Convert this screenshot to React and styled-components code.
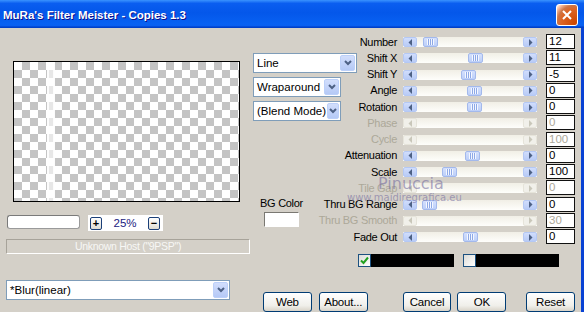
import React from "react";
import styled, { createGlobalStyle } from "styled-components";

const GlobalStyle = createGlobalStyle`
  * { box-sizing: border-box; }
  html, body {
    margin: 0;
    padding: 0;
    width: 584px;
    height: 312px;
    overflow: hidden;
    background: #d4d0c8;
  }
  body {
    font-family: "Liberation Sans", Arial, sans-serif;
    font-size: 11px;
    color: #000;
  }
`;

const Window = styled.div`
  width: 584px;
  height: 312px;
  display: flex;
  flex-direction: column;
  background: #d4d0c8;
  overflow: hidden;
`;

const TitleBar = styled.div`
  flex: none;
  height: 28px;
  display: flex;
  align-items: center;
  justify-content: space-between;
  padding: 2px 6px 0 3px;
  background: linear-gradient(
    180deg,
    #3a93ff 0%,
    #0a5ef0 12%,
    #0457ea 45%,
    #0861f2 85%,
    #0a5ff0 92%,
    #0044d0 96%,
    #003cc4 100%
  );
`;

const Title = styled.div`
  color: #fff;
  font-weight: bold;
  font-size: 11.5px;
  text-shadow: 1px 1px #0f1089;
`;

const CloseButton = styled.div`
  width: 22px;
  height: 22px;
  border: 1px solid #fff;
  border-radius: 3px;
  display: flex;
  align-items: center;
  justify-content: center;
  background: radial-gradient(
    circle at 90% 90%,
    #cc4600 0%,
    #dc6527 55%,
    #cd7546 70%,
    #ffccb2 90%,
    #fff 100%
  );
`;

const Body = styled.div`
  flex: 1;
  display: flex;
  gap: 3px;
  padding: 0 6px;
  border-right: 3px solid #0842d4;
`;

const LeftColumn = styled.div`
  width: 244px;
  flex: none;
  display: flex;
  flex-direction: column;
  padding-top: 33px;
`;

const Preview = styled.div`
  margin-left: 7px;
  width: 227px;
  height: 141px;
  border: 1px solid #000;
  background-color: #fff;
  background-image: linear-gradient(
      90deg,
      transparent 33px,
      rgba(255, 255, 255, 0.95) 33px 35px,
      rgba(255, 255, 255, 0.6) 35px 39px,
      rgba(255, 255, 255, 0.95) 39px 41px,
      transparent 41px
    ),
    conic-gradient(#c4c4c4 25%, #fff 0 50%, #c4c4c4 0 75%, #fff 0);
  background-size: auto, 16px 16px;
`;

const ZoomRow = styled.div`
  margin-top: 13px;
  display: flex;
  align-items: flex-start;
`;

const NameField = styled.div`
  margin-left: 1px;
  width: 73px;
  height: 14px;
  background: #fff;
  border: 1px solid #7a7a7a;
  border-right-color: #9a9a9a;
  border-bottom-color: #9a9a9a;
  border-radius: 3px;
`;

const ZoomControls = styled.div`
  margin-left: 8px;
  width: 75px;
  height: 16px;
  background: #fff;
  display: flex;
  align-items: center;
  justify-content: space-between;
  padding: 0 3px 0 2px;
`;

const TinyButton = styled.div`
  width: 12px;
  height: 13px;
  border: 1px solid #1b3f78;
  border-radius: 2px;
  background: linear-gradient(#ffffff, #dedcd3);
  display: flex;
  align-items: center;
  justify-content: center;
  font-weight: bold;
  font-size: 11px;
  line-height: 1;
`;

const ZoomValue = styled.div`
  color: #1a1a80;
  font-size: 11.5px;
`;

const StatusBar = styled.div`
  margin-top: 8px;
  height: 15px;
  border: 1px solid #fff;
  border-top-color: #a7a39a;
  border-left-color: #a7a39a;
  color: #f7f7f5;
  font-size: 10.5px;
  letter-spacing: -0.3px;
  line-height: 13px;
  text-align: center;
`;

const SelectBox = styled.div`
  width: ${(p) => p.$w}px;
  height: 20px;
  flex: none;
  display: flex;
  background: #fff;
  border: 1px solid #7f9db9;
  margin-top: ${(p) => p.$mt || 0}px;
`;

const SelectText = styled.div`
  flex: 1;
  padding-left: 3px;
  font-size: 11.5px;
  line-height: 18px;
  white-space: nowrap;
`;

const SelectArrow = styled.div`
  width: 15px;
  margin: 1px;
  border: 1px solid #bcd0f9;
  border-radius: 2px;
  background: linear-gradient(#d2defc, #b5c9f6);
  display: flex;
  align-items: center;
  justify-content: center;
`;

const RightArea = styled.div`
  position: relative;
  width: 322px;
  flex: none;
  display: flex;
  flex-direction: column;
`;

const ParamGrid = styled.div`
  margin-top: 6px;
  display: grid;
  grid-template-columns: 1fr 140px 38px;
  grid-template-rows: repeat(13, 16.25px);
`;

const ModeStack = styled.div`
  grid-column: 1;
  grid-row: 2 / span 5;
  justify-self: start;
  align-self: start;
  margin-top: 3px;
  display: flex;
  flex-direction: column;
  gap: 4px;
`;

const BgColor = styled.div`
  grid-column: 1;
  grid-row: 11 / span 3;
  justify-self: start;
  align-self: start;
  margin-left: 7px;
  width: 43px;
  display: flex;
  flex-direction: column;
  align-items: center;
  gap: 2px;
`;

const BgLabel = styled.div`
  line-height: 13px;
  letter-spacing: -0.3px;
  white-space: nowrap;
`;

const Swatch = styled.div`
  width: 35px;
  height: 15px;
  background: #fff;
  border: 1px solid #fff;
  border-top-color: #7a7872;
  border-left-color: #7a7872;
`;

const Label = styled.div`
  grid-column: 1;
  grid-row: ${(p) => p.$row};
  justify-self: end;
  align-self: center;
  line-height: 13px;
  letter-spacing: -0.3px;
  white-space: nowrap;
  color: ${(p) => (p.$disabled ? "#aca899" : "#000")};
`;

const ScrollTrack = styled.div`
  grid-column: 2;
  grid-row: ${(p) => p.$row};
  justify-self: end;
  align-self: center;
  width: 134px;
  height: 10px;
  display: flex;
  background: linear-gradient(#f1efe6, #fefefb);
`;

const ScrollArrow = styled.div`
  width: 14px;
  flex: none;
  border: 1px solid ${(p) => (p.$disabled ? "#e6e4da" : "#b4c8f4")};
  border-radius: 2px;
  background: ${(p) =>
    p.$disabled ? "#f1f0ea" : "linear-gradient(#d0ddfc, #b8cbf6)"};
  display: flex;
  align-items: center;
  justify-content: center;
`;

const Channel = styled.div`
  flex: 1;
  display: flex;
`;

const Thumb = styled.div`
  width: 15px;
  margin-left: ${(p) => p.$pos}px;
  border: 1px solid #a3b9ec;
  border-radius: 2px;
  background: linear-gradient(#d4e0fd, #bccff9);
  display: flex;
  align-items: center;
  justify-content: center;

  &::before {
    content: "";
    width: 7px;
    height: 6px;
    background: repeating-linear-gradient(
      90deg,
      #f4f7ff 0 1px,
      #8ea9e6 1px 2px
    );
  }
`;

const ValueBox = styled.div`
  grid-column: 3;
  grid-row: ${(p) => p.$row};
  justify-self: end;
  align-self: start;
  width: 29px;
  height: 15px;
  background: #fff;
  border: 1px solid #111;
  padding-left: 2px;
  font-size: 11.5px;
  line-height: 13px;
  color: ${(p) => (p.$disabled ? "#aca899" : "#000")};
`;

const ColorRow = styled.div`
  margin-top: 9px;
  padding-left: 105px;
  display: flex;
  gap: 9px;
`;

const ColorPick = styled.div`
  display: flex;
`;

const CheckBox = styled.div`
  width: 13px;
  height: 13px;
  border: 1px solid #1c5180;
  background: linear-gradient(135deg, #dcdcd7 0%, #ffffff 100%);
  display: flex;
  align-items: center;
  justify-content: center;
`;

const ColorBar = styled.div`
  width: 83px;
  height: 13px;
  background: #000;
`;

const ButtonRow = styled.div`
  margin-top: 25px;
  padding-left: 10px;
  display: flex;
`;

const PushButton = styled.div`
  width: 49px;
  height: 20px;
  margin-left: ${(p) => p.$ml || 0}px;
  border: 1px solid #003c74;
  border-radius: 3px;
  background: linear-gradient(#ffffff, #f0efea 70%, #d8d3c8);
  display: flex;
  align-items: center;
  justify-content: center;
  font-size: 11.5px;
  letter-spacing: -0.2px;
`;

const Watermark = styled.div`
  position: absolute;
  left: ${(p) => p.$x}px;
  top: ${(p) => p.$y}px;
  font-family: "DejaVu Sans", sans-serif;
  font-size: ${(p) => p.$size}px;
  color: rgba(118, 110, 160, 0.6);
  white-space: nowrap;
  pointer-events: none;
  line-height: 1;
`;

const Chevron = () => (
  <svg width="8" height="6" viewBox="0 0 8 6">
    <polyline
      points="1,1 4,4 7,1"
      fill="none"
      stroke="#4d6185"
      strokeWidth="2"
    />
  </svg>
);

const Triangle = ({ dir, disabled }) => (
  <svg width="5" height="7" viewBox="0 0 5 7">
    <polygon
      points={dir === "left" ? "4,0 0.5,3.5 4,7" : "1,0 4.5,3.5 1,7"}
      fill={disabled ? "#c9c7ba" : "#4d6185"}
    />
  </svg>
);

const Select = ({ w, mt, children }) => (
  <SelectBox $w={w} $mt={mt}>
    <SelectText>{children}</SelectText>
    <SelectArrow>
      <Chevron />
    </SelectArrow>
  </SelectBox>
);

const ScrollBar = ({ row, pos, disabled }) => (
  <ScrollTrack $row={row}>
    <ScrollArrow $disabled={disabled}>
      <Triangle dir="left" disabled={disabled} />
    </ScrollArrow>
    <Channel>{!disabled && <Thumb $pos={pos} />}</Channel>
    <ScrollArrow $disabled={disabled}>
      <Triangle dir="right" disabled={disabled} />
    </ScrollArrow>
  </ScrollTrack>
);

const params = [
  { label: "Number", value: "12", pos: 6 },
  { label: "Shift X", value: "11", pos: 51 },
  { label: "Shift Y", value: "-5", pos: 44 },
  { label: "Angle", value: "0", pos: 50 },
  { label: "Rotation", value: "0", pos: 50 },
  { label: "Phase", value: "0", disabled: true },
  { label: "Cycle", value: "100", disabled: true },
  { label: "Attenuation", value: "0", pos: 48 },
  { label: "Scale", value: "100", pos: 25 },
  { label: "Tile Gap", value: "0", disabled: true },
  { label: "Thru BG Range", value: "0", pos: 5 },
  { label: "Thru BG Smooth", value: "30", disabled: true },
  { label: "Fade Out", value: "0", pos: 46 },
];

const App = () => {
  return (
    <>
      <GlobalStyle />
      <Window>
        <TitleBar>
          <Title>MuRa's Filter Meister - Copies 1.3</Title>
          <CloseButton>
            <svg width="12" height="12" viewBox="0 0 12 12">
              <path
                d="M2 2 L10 10 M10 2 L2 10"
                stroke="#fff"
                strokeWidth="2"
              />
            </svg>
          </CloseButton>
        </TitleBar>
        <Body>
          <LeftColumn>
            <Preview />
            <ZoomRow>
              <NameField />
              <ZoomControls>
                <TinyButton>+</TinyButton>
                <ZoomValue>25%</ZoomValue>
                <TinyButton>−</TinyButton>
              </ZoomControls>
            </ZoomRow>
            <StatusBar>Unknown Host ("9PSP")</StatusBar>
            <Select w={224} mt={26}>
              *Blur(linear)
            </Select>
          </LeftColumn>
          <RightArea>
            <ParamGrid>
              <ModeStack>
                <Select w={104}>Line</Select>
                <Select w={88}>Wraparound</Select>
                <Select w={88}>(Blend Mode)</Select>
              </ModeStack>
              <BgColor>
                <BgLabel>BG Color</BgLabel>
                <Swatch />
              </BgColor>
              {params.map((p, i) => (
                <React.Fragment key={p.label}>
                  <Label $row={i + 1} $disabled={p.disabled}>
                    {p.label}
                  </Label>
                  <ScrollBar row={i + 1} pos={p.pos} disabled={p.disabled} />
                  <ValueBox $row={i + 1} $disabled={p.disabled}>
                    {p.value}
                  </ValueBox>
                </React.Fragment>
              ))}
            </ParamGrid>
            <ColorRow>
              <ColorPick>
                <CheckBox>
                  <svg width="9" height="9" viewBox="0 0 9 9">
                    <polyline
                      points="1,4.5 3.5,7 8,1.5"
                      fill="none"
                      stroke="#21a121"
                      strokeWidth="2"
                    />
                  </svg>
                </CheckBox>
                <ColorBar />
              </ColorPick>
              <ColorPick>
                <CheckBox />
                <ColorBar />
              </ColorPick>
            </ColorRow>
            <ButtonRow>
              <PushButton>Web</PushButton>
              <PushButton $ml={7}>About...</PushButton>
              <PushButton $ml={35}>Cancel</PushButton>
              <PushButton $ml={6}>OK</PushButton>
              <PushButton $ml={20}>Reset</PushButton>
            </ButtonRow>
            <Watermark $x={125} $y={148} $size={16}>
              Pinuccia
            </Watermark>
            <Watermark $x={94} $y={165} $size={10}>
              www.maidiregrafica.eu
            </Watermark>
          </RightArea>
        </Body>
      </Window>
    </>
  );
};

export default App;
